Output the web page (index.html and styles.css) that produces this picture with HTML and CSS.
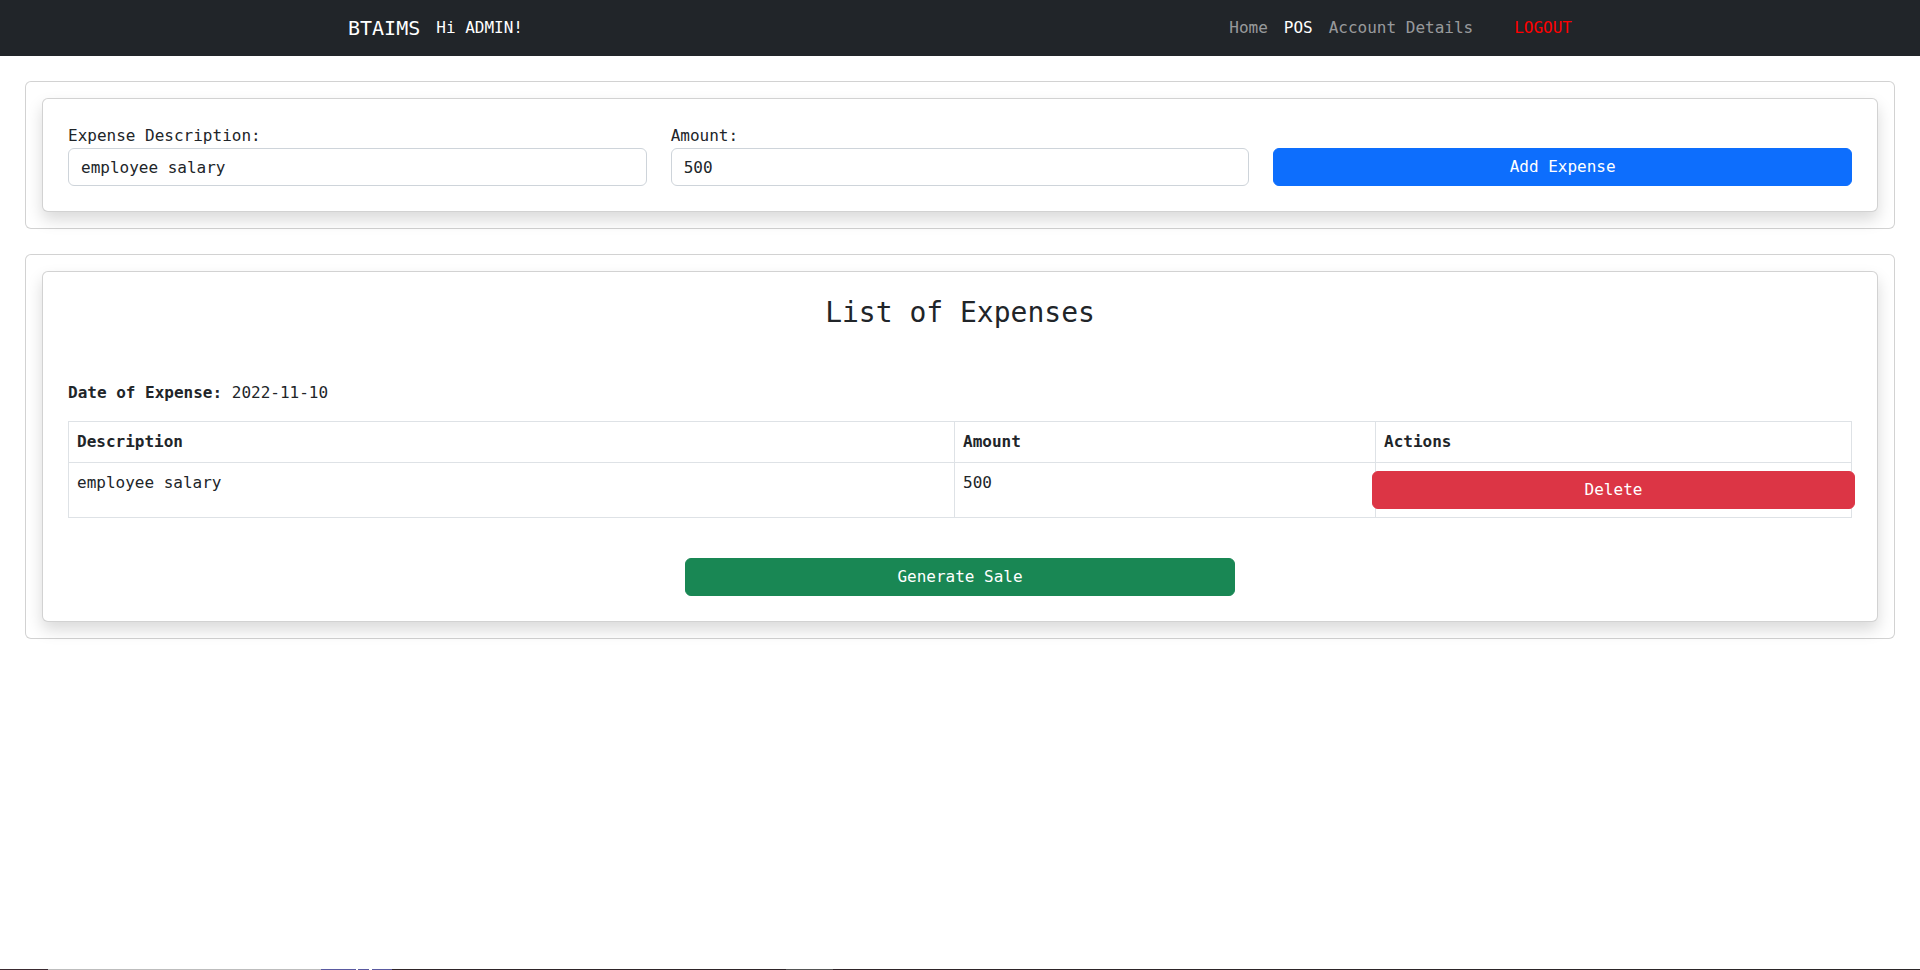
FILE: index.html
```html
<!DOCTYPE html>
<html lang="en">
<head>
<meta charset="utf-8">
<title>BTAIMS - Expenses</title>
<link rel="stylesheet" href="styles.css">
</head>
<body>
<nav class="navbar">
  <div class="nav-inner">
    <div class="brand-group">
      <span class="brand">BTAIMS</span>
      <span class="greeting">Hi ADMIN!</span>
    </div>
    <ul class="nav-links">
      <li><a class="nav-link" href="#">Home</a></li>
      <li><a class="nav-link active" href="#">POS</a></li>
      <li><a class="nav-link" href="#">Account Details</a></li>
      <li><a class="nav-link logout" href="#">LOGOUT</a></li>
    </ul>
  </div>
</nav>

<main class="page">
  <section class="outer-card">
    <div class="inner-card">
      <form class="expense-form">
        <div class="field">
          <label class="field-label" for="desc">Expense Description:</label>
          <input class="form-control" id="desc" type="text" value="employee salary">
        </div>
        <div class="field">
          <label class="field-label" for="amount">Amount:</label>
          <input class="form-control" id="amount" type="text" value="500">
        </div>
        <div class="field field-action">
          <button class="btn btn-primary" type="button">Add Expense</button>
        </div>
      </form>
    </div>
  </section>

  <section class="outer-card">
    <div class="inner-card">
      <h3 class="list-title">List of Expenses</h3>
      <p class="expense-date"><strong>Date of Expense:</strong> 2022-11-10</p>
      <table class="expense-table">
        <colgroup>
          <col class="col-desc">
          <col class="col-amount">
          <col class="col-actions">
        </colgroup>
        <thead>
          <tr>
            <th>Description</th>
            <th>Amount</th>
            <th>Actions</th>
          </tr>
        </thead>
        <tbody>
          <tr>
            <td>employee salary</td>
            <td>500</td>
            <td><div class="action-row"><button class="btn btn-danger" type="button">Delete</button></div></td>
          </tr>
        </tbody>
      </table>
      <div class="generate-wrap">
        <button class="btn btn-success generate" type="button">Generate Sale</button>
      </div>
    </div>
  </section>
</main>

<div class="screen-edge"></div>
</body>
</html>
```

FILE: styles.css
```css
* {
  box-sizing: border-box;
}

html, body {
  height: 100%;
}

body {
  margin: 0;
  font-family: "DejaVu Sans Mono", "Liberation Mono", monospace;
  font-size: 16px;
  line-height: 1.5;
  color: #212529;
  background: #fff;
  display: flex;
  flex-direction: column;
  overflow: hidden;
}

/* ---------- Navbar ---------- */
.navbar {
  background: #212529;
  height: 56px;
  flex: none;
}

.nav-inner {
  width: 1240px;
  margin: 0 auto;
  padding-left: 8px;
  height: 100%;
  display: flex;
  align-items: center;
  justify-content: space-between;
}

.brand-group {
  display: flex;
  align-items: center;
  gap: 16px;
}

.brand {
  color: #fff;
  font-size: 20px;
  line-height: 30px;
}

.greeting {
  color: #fff;
  font-size: 16px;
  line-height: 24px;
}

.nav-links {
  list-style: none;
  margin: 0;
  padding: 0;
  display: flex;
  align-items: center;
}

.nav-link {
  display: block;
  padding: 8px;
  color: rgba(255, 255, 255, 0.55);
  text-decoration: none;
  line-height: 24px;
}

.nav-link.active {
  color: #fff;
}

.nav-link.logout {
  color: #ff0000;
  margin-left: 25px;
}

/* ---------- Cards ---------- */
.page {
  padding: 0 25px;
  flex: none;
}

.outer-card {
  margin-top: 25px;
  border: 1px solid rgba(0, 0, 0, 0.175);
  border-radius: 6px;
  padding: 16px;
  background: #fff;
}

.inner-card {
  border: 1px solid rgba(0, 0, 0, 0.175);
  border-radius: 6px;
  padding: 25px;
  background: #fff;
  box-shadow: 0 8px 16px rgba(0, 0, 0, 0.15);
}

/* ---------- Form ---------- */
.expense-form {
  display: grid;
  grid-template-columns: repeat(3, 1fr);
  column-gap: 24px;
  align-items: end;
}

.field {
  display: flex;
  flex-direction: column;
}

.field-label {
  line-height: 24px;
}

.form-control {
  height: 38px;
  padding: 6px 12px;
  font: inherit;
  line-height: 24px;
  color: #212529;
  background: #fff;
  border: 1px solid #ced4da;
  border-radius: 6px;
  outline: none;
}

/* ---------- Buttons ---------- */
.btn {
  height: 38px;
  padding: 6px 12px;
  font: inherit;
  line-height: 24px;
  color: #fff;
  border: 1px solid transparent;
  border-radius: 6px;
  width: 100%;
  text-align: center;
  cursor: pointer;
}

.btn-primary {
  background: #0d6efd;
  border-color: #0d6efd;
}

.btn-danger {
  background: #dc3545;
  border-color: #dc3545;
}

.btn-success {
  background: #198754;
  border-color: #198754;
}

/* ---------- List ---------- */
.list-title {
  margin: 0 0 52px;
  font-size: 28px;
  font-weight: 400;
  line-height: 32px;
  text-align: center;
}

.expense-date {
  margin: 0 0 16px;
  line-height: 24px;
}

.expense-table {
  width: 100%;
  border-collapse: collapse;
  table-layout: fixed;
}

.col-desc {
  width: 886px;
}

.col-amount {
  width: 421px;
}

.expense-table th,
.expense-table td {
  border: 1px solid #dee2e6;
  padding: 8px;
  text-align: left;
  vertical-align: top;
  line-height: 24px;
}

.expense-table th {
  font-weight: 700;
}

.action-row {
  margin: 0 -12px;
}

.generate-wrap {
  display: flex;
  justify-content: center;
  margin-top: 40px;
}

.generate {
  width: 550px;
}

/* ---------- bottom screen edge ---------- */
.screen-edge {
  margin-top: auto;
  height: 1px;
  flex: none;
  background: linear-gradient(to right,
    #3a2a30 0, #3a2a30 48px,
    #bdbdbd 48px, #bdbdbd 321px,
    #5a5aa0 321px, #5a5aa0 356px,
    #ffffff 356px, #ffffff 358px,
    #5a5aa0 358px, #5a5aa0 369px,
    #ffffff 369px, #ffffff 372px,
    #5a5aa0 372px, #5a5aa0 392px,
    #2e2428 392px, #2e2428 786px,
    #555555 786px, #555555 833px,
    #2e2428 833px, #2b2628 100%);
}
```
